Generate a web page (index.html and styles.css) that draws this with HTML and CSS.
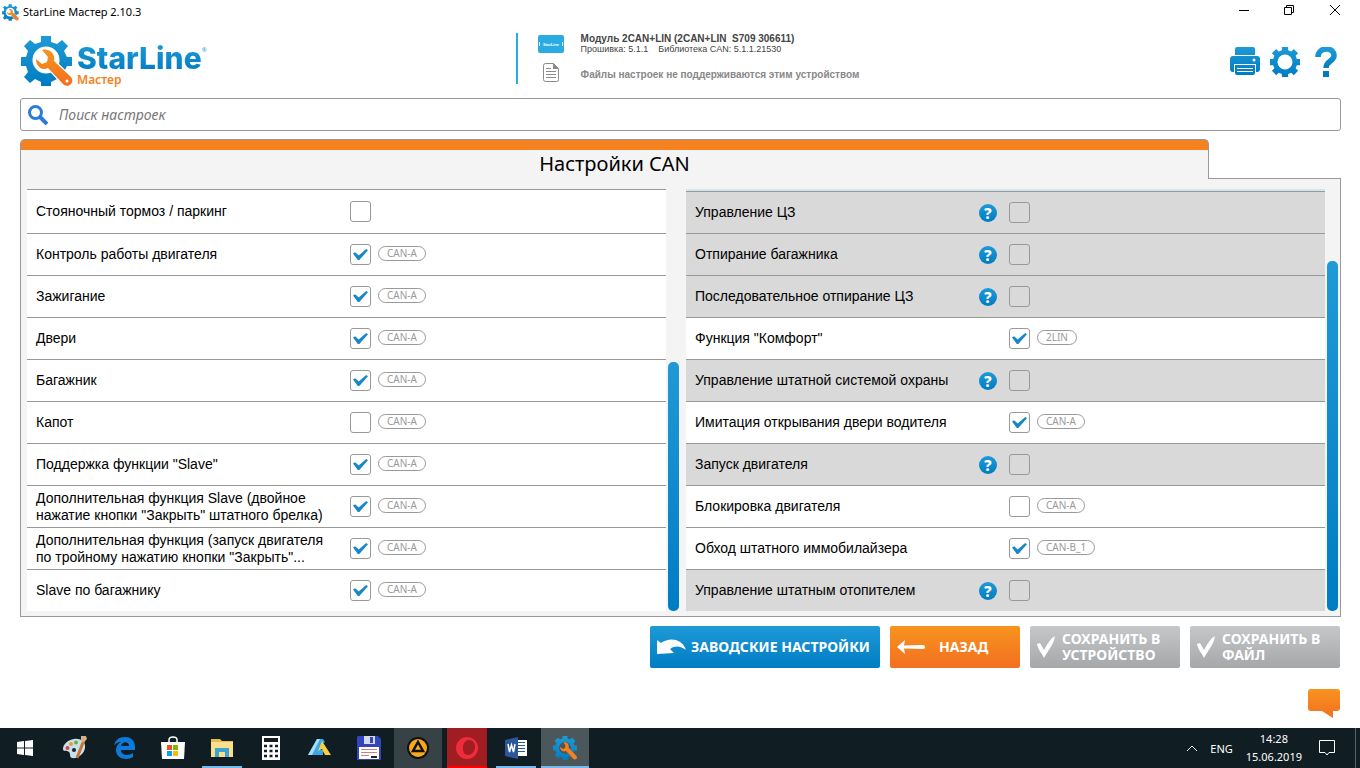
FILE: index.html
```html
<!DOCTYPE html>
<html lang="ru">
<head>
<meta charset="utf-8">
<title>StarLine Мастер 2.10.3</title>
<link rel="stylesheet" href="styles.css">
</head>
<body>
<svg class="defs" width="0" height="0" aria-hidden="true">
  <defs>
    <linearGradient id="blue" x1="0" y1="0" x2="0" y2="1"><stop offset="0" stop-color="#1f9ad6"/><stop offset="1" stop-color="#007cc3"/></linearGradient>
    <linearGradient id="orange" x1="0" y1="0" x2="0" y2="1"><stop offset="0" stop-color="#f7941e"/><stop offset="1" stop-color="#f36f21"/></linearGradient>
    <symbol id="gear" viewBox="0 0 48 48">
      <path fill="url(#blue)" fill-rule="evenodd" d="M19 0h10v5l5 2 4-4 7 7-4 4 2 5h5v10h-5l-2 5 4 4-7 7-4-4-5 2v5H19v-5l-5-2-4 4-7-7 4-4-2-5H0V19h5l2-5-4-4 7-7 4 4 5-2zM24 12a12 12 0 1 0 0 24 12 12 0 0 0 0-24z"/>
    </symbol>
    <symbol id="wrench-gear" viewBox="0 0 52 52">
      <path fill="url(#blue)" d="M20 1h10v6l6 2 5-4 6 6-4 5 3 6h5v9h-5l-3 6 4 5-6 7-5-5-6 3v4H20v-4l-6-3-5 4-6-6 4-5-2-6H0v-9h5l2-6-4-5 6-6 5 4 6-2z"/>
      <circle cx="25" cy="25" r="13.500" fill="#fff"/>
      <path fill="url(#orange)" stroke="#fff" stroke-width="2.500" paint-order="stroke" d="M21 15c7-2 14 4 12 11l17 16c4 5-2 11-7 8L27 33c-7 3-12-2-12-9l6 5 5-2 1-5z"/>
      <circle cx="46" cy="46" r="1.500" fill="#fff"/>
    </symbol>
    <symbol id="tick" viewBox="0 0 18 22"><path fill="#fff" d="M0 8l3-1 4 7C10 8 13 3 18 0c-1 8-6 13-11 22C5 17 1 14 0 8z"/></symbol>
  </defs>
</svg>

<header class="titlebar">
  <svg class="app-icon"><use href="#wrench-gear"/></svg>
  <span class="app-title">StarLine Мастер 2.10.3</span>
  <div class="window-controls">
    <button aria-label="Свернуть"><svg width="12" height="12" viewBox="0 0 12 12"><path d="M1 6.500h10" stroke="#000"/></svg></button>
    <button aria-label="Восстановить"><svg width="12" height="12" viewBox="0 0 12 12" fill="none" stroke="#000"><path d="M1.500 3.500h7v7h-7zM3.500 3V1.500h7v7H9"/></svg></button>
    <button aria-label="Закрыть"><svg width="12" height="12" viewBox="0 0 12 12"><path d="M1 1l10 10M11 1L1 11" stroke="#000"/></svg></button>
  </div>
</header>

<main class="app">
  <section class="topbar">
    <div class="brand">
      <svg class="brand-icon"><use href="#wrench-gear"/></svg>
      <div class="brand-text"><span class="brand-name">StarLine</span><span class="brand-sub">Мастер</span></div>
      <span class="brand-mark">®</span>
    </div>
    <div class="device">
      <svg width="26" height="18" viewBox="0 0 26 18"><rect width="26" height="18" rx="2" fill="#2aace2"/><path d="M1.500 7v4M24.500 7v4" stroke="#fff"/><text x="13" y="11" class="chip-text">StarLine</text></svg>
      <div class="device-info"><strong>Модуль 2CAN+LIN (2CAN+LIN&nbsp; S709 306611)</strong><span class="firmware">Прошивка: 5.1.1 &nbsp;&nbsp; Библиотека CAN: 5.1.1.21530</span></div>
      <svg class="doc-icon" width="16" height="19" viewBox="0 0 16 19"><path d="M2.500.5h8l5 5v11q0 2-2 2h-11q-2 0-2-2v-14q0-2 2-2z" fill="#fff" stroke="#8a8a8a"/><path d="M10 0v6h6z" fill="#8a8a8a"/><path d="M3 5.500h5M3 8.500h10M3 11.500h10M3 14.500h10" stroke="#8a8a8a"/></svg>
      <div class="device-note">Файлы настроек не поддерживаются этим устройством</div>
    </div>
    <div class="tools">
      <button aria-label="Печать"><svg width="30" height="28" viewBox="0 0 30 28"><path fill="url(#blue)" d="M5 8V2q0-2 2-2h16q2 0 2 2v6zM3 9h24q3 0 3 3v10q0 3-3 3h-1v-8H4v8H3q-3 0-3-3V12q0-3 3-3zM5 18h20v8q0 2-2 2H7q-2 0-2-2z"/><circle cx="24" cy="13" r="1.500" fill="#fff"/><path d="M7 21.500h16M7 24.500h16" fill="none" stroke="#fff" stroke-width="1.200"/></svg></button>
      <button aria-label="Параметры"><svg width="30" height="30"><use href="#gear"/></svg></button>
      <button aria-label="Справка"><svg width="22" height="30" viewBox="0 0 22 30"><path fill="none" stroke="url(#blue)" stroke-width="5.500" d="M3 10C3-.5 19-.5 19 8.500c0 6-8 5-8 12.500"/><path fill="#007cc3" d="M8 24h6v6H8z"/></svg></button>
    </div>
  </section>

  <div class="search">
    <svg width="20" height="20" viewBox="0 0 20 20" fill="none" stroke="#2b7cd9"><circle cx="7.500" cy="7.500" r="6" stroke-width="3"/><path d="M12 12l7 7" stroke-width="4"/></svg>
    <input type="search" placeholder="Поиск настроек" aria-label="Поиск настроек">
  </div>

  <button class="tab">Настройки CAN</button>
  <section class="panel">
    <div class="column">
      <ul class="list">
        <li class="row first"><div class="head"><label for="l1">Стояночный тормоз / паркинг</label></div><input type="checkbox" id="l1"></li>
        <li class="row"><div class="head"><label for="l2">Контроль работы двигателя</label></div><input type="checkbox" id="l2" checked><span class="bus">CAN-A</span></li>
        <li class="row"><div class="head"><label for="l3">Зажигание</label></div><input type="checkbox" id="l3" checked><span class="bus">CAN-A</span></li>
        <li class="row"><div class="head"><label for="l4">Двери</label></div><input type="checkbox" id="l4" checked><span class="bus">CAN-A</span></li>
        <li class="row"><div class="head"><label for="l5">Багажник</label></div><input type="checkbox" id="l5" checked><span class="bus">CAN-A</span></li>
        <li class="row"><div class="head"><label for="l6">Капот</label></div><input type="checkbox" id="l6"><span class="bus">CAN-A</span></li>
        <li class="row"><div class="head"><label for="l7">Поддержка функции "Slave"</label></div><input type="checkbox" id="l7" checked><span class="bus">CAN-A</span></li>
        <li class="row"><div class="head"><label for="l8">Дополнительная функция Slave (двойное<br>нажатие кнопки "Закрыть" штатного брелка)</label></div><input type="checkbox" id="l8" checked><span class="bus">CAN-A</span></li>
        <li class="row"><div class="head"><label for="l9">Дополнительная функция (запуск двигателя<br>по тройному нажатию кнопки "Закрыть"...</label></div><input type="checkbox" id="l9" checked><span class="bus">CAN-A</span></li>
        <li class="row"><div class="head"><label for="l10">Slave по багажнику</label></div><input type="checkbox" id="l10" checked><span class="bus">CAN-A</span></li>
      </ul>
      <div class="track"><div class="thumb thumb-left"></div></div>
    </div>
    <div class="column">
      <ul class="list list-scrolled">
        <li class="row off"><div class="head"><label for="r1">Управление ЦЗ</label><button class="help" aria-label="Подсказка">?</button></div><input type="checkbox" id="r1" disabled></li>
        <li class="row off"><div class="head"><label for="r2">Отпирание багажника</label><button class="help" aria-label="Подсказка">?</button></div><input type="checkbox" id="r2" disabled></li>
        <li class="row off"><div class="head"><label for="r3">Последовательное отпирание ЦЗ</label><button class="help" aria-label="Подсказка">?</button></div><input type="checkbox" id="r3" disabled></li>
        <li class="row"><div class="head"><label for="r4">Функция "Комфорт"</label></div><input type="checkbox" id="r4" checked><span class="bus">2LIN</span></li>
        <li class="row off"><div class="head"><label for="r5">Управление штатной системой охраны</label><button class="help" aria-label="Подсказка">?</button></div><input type="checkbox" id="r5" disabled></li>
        <li class="row"><div class="head"><label for="r6">Имитация открывания двери водителя</label></div><input type="checkbox" id="r6" checked><span class="bus">CAN-A</span></li>
        <li class="row off"><div class="head"><label for="r7">Запуск двигателя</label><button class="help" aria-label="Подсказка">?</button></div><input type="checkbox" id="r7" disabled></li>
        <li class="row"><div class="head"><label for="r8">Блокировка двигателя</label></div><input type="checkbox" id="r8"><span class="bus">CAN-A</span></li>
        <li class="row"><div class="head"><label for="r9">Обход штатного иммобилайзера</label></div><input type="checkbox" id="r9" checked><span class="bus">CAN-B_1</span></li>
        <li class="row off"><div class="head"><label for="r10">Управление штатным отопителем</label><button class="help" aria-label="Подсказка">?</button></div><input type="checkbox" id="r10" disabled></li>
      </ul>
      <div class="track"><div class="thumb thumb-right"></div></div>
    </div>
  </section>

  <div class="actions">
    <button class="action primary"><svg width="29" height="16" viewBox="0 0 29 16"><path fill="#fff" d="M0 1l4 3C12-2 25-1 29 11c-5-4-11-5-16-1l4 4L0 15z"/></svg><span>ЗАВОДСКИЕ НАСТРОЙКИ</span></button>
    <button class="action back"><svg width="28" height="16" viewBox="0 0 28 16"><path fill="#fff" d="M0 8l8-7-1 5.500 19-.5q2 0 2 2t-2 2l-19-.5L8 15z"/></svg><span>НАЗАД</span></button>
    <button class="action save" disabled><svg width="18" height="22"><use href="#tick"/></svg><span>СОХРАНИТЬ В УСТРОЙСТВО</span></button>
    <button class="action save" disabled><svg width="18" height="22"><use href="#tick"/></svg><span>СОХРАНИТЬ В ФАЙЛ</span></button>
  </div>
  <button class="chat" aria-label="Обратная связь"><svg width="32" height="29" viewBox="0 0 32 29"><path fill="url(#orange)" d="M3 0h26q3 0 3 3v16q0 3-3 3h-4v7l-11-7H3q-3 0-3-3V3q0-3 3-3z"/></svg></button>
</main>

<footer class="taskbar">
  <button class="task start" aria-label="Пуск"><svg width="16" height="16" viewBox="0 0 16 16" fill="#fff"><path d="M0 2l7-1v6.500H0zM8 1l8-1v7.500H8zM0 8.500h7V15l-7-1zM8 8.500h8V16l-8-1z"/></svg></button>
  <button class="task" aria-label="Paint"><svg width="24" height="24" viewBox="0 0 24 24"><path fill="#c8e0ee" d="M11 3c8-1 12 4 11 9-1 6-7 11-13 10-3-1-1-4-3-6s-6 0-6-3C0 8 5 4 11 3z"/><circle cx="4.500" cy="12" r="2" fill="#d8453c"/><circle cx="8" cy="8" r="2" fill="#e39b38"/><circle cx="13" cy="6.500" r="2" fill="#6cb33e"/><circle cx="11" cy="14" r="2" fill="#15232a"/><path d="M21 4l-7 18" stroke="#c97432" stroke-width="3"/><path d="M18 0h5l1 3-4 4-2-3z" fill="#d8ae82"/></svg></button>
  <button class="task" aria-label="Edge"><svg width="21" height="22" viewBox="0 0 21 22"><path fill="#0c7bd9" fill-rule="evenodd" d="M0 9C1 3 5 0 11 0c7 0 10 5 10 10v3H7c0 6 8 6 12 3v4c-6 4-17 2-17-7 0-4 2-6 5-8-4 0-6 2-7 4zm7 0h8c0-5-7-5-8 0z"/></svg></button>
  <button class="task" aria-label="Store"><svg width="24" height="24" viewBox="0 0 24 24"><path fill="none" stroke="#fff" stroke-width="1.500" d="M8 7V4q0-3 4-3t4 3v3"/><path fill="#fff" d="M0 6h24l-1 17H1z"/><path fill="#f25022" d="M6 9h5v5H6z"/><path fill="#7fba00" d="M12 9h5v5h-5z"/><path fill="#00a4ef" d="M6 15h5v5H6z"/><path fill="#ffb900" d="M12 15h5v5h-5z"/></svg></button>
  <button class="task open" aria-label="Проводник"><svg width="22" height="20" viewBox="0 0 22 20"><path fill="#e8bc4b" d="M0 1h9l2 2h11v4H0z"/><path fill="#fbe08c" d="M0 4h22v15H0z"/><path fill="#3ba4d2" d="M4 10h14v9h-4v-5H8v5H4z"/></svg></button>
  <button class="task" aria-label="Калькулятор"><svg width="18" height="24" viewBox="0 0 18 24"><path fill="#fff" d="M0 0h18v24H0z"/><path fill="#101d22" d="M2 2h14v4H2z"/><path stroke="#101d22" stroke-width="2.500" stroke-dasharray="3 2.500" d="M2 10h14M2 15h14M2 20h14"/></svg></button>
  <button class="task" aria-label="Проигрыватель"><svg width="24" height="20" viewBox="0 0 24 20"><path fill="#39a7e8" d="M9 1h6l2 3-3 2-3 6h4v5H0z"/><path fill="#a9dcf8" d="M9 1h3L4 17H0z"/><path fill="#f6cf45" d="M14 3l9 14h-6l-3-6-4 2z"/></svg></button>
  <button class="task" aria-label="Total Commander"><svg width="24" height="24" viewBox="0 0 24 24"><path fill="#3444bb" d="M1 0h20l3 3v21H0V1z"/><path fill="#d5dbe8" d="M7 0h11v8H7z"/><path fill="#3444bb" d="M13 1h3v6h-3z"/><path fill="#fff" d="M2 11h20v12H2z"/><path stroke="#cf8080" d="M4 13.500h16M4 16.500h16M4 19.500h8"/><path stroke="#222" stroke-width="2" d="M14 21h6"/></svg></button>
  <button class="task lit" aria-label="AIMP"><svg width="22" height="22" viewBox="0 0 22 22"><circle cx="11" cy="11" r="11" fill="#111"/><circle cx="11" cy="11" r="9" fill="#f6a91c"/><path fill="#f6a91c" stroke="#111" stroke-width="2.500" d="M11 5l5 9H6z"/></svg></button>
  <button class="task opera" aria-label="Opera"><svg width="22" height="24" viewBox="0 0 22 24"><path fill="#ee2c3c" fill-rule="evenodd" d="M11 1a11 11 0 1 0 0 22 11 11 0 0 0 0-22zm2 3c4 0 6 3 6 7s-3 8-7 8-5-3-5-7 2-8 6-8z"/></svg></button>
  <button class="task open" aria-label="Word"><svg width="22" height="22" viewBox="0 0 22 22"><path fill="#fff" d="M12 3h10v16H12z"/><path stroke="#2b579a" d="M13 5.500h7M13 8.500h7M13 11.500h7M13 14.500h7"/><path fill="#2b579a" d="M0 3l13-3v22L0 19z"/><path fill="none" stroke="#fff" stroke-width="1.500" d="M3 7l1.500 8L6.500 8l2 7L10 7"/></svg></button>
  <button class="task open active" aria-label="StarLine Мастер"><svg width="24" height="24" viewBox="0 0 48 48"><use href="#gear"/><path fill="#f58220" stroke="#4b575b" stroke-width="2" paint-order="stroke" d="M21 13c7-2 12 4 10 10l16 17c3 5-2 9-6 6L26 30c-7 3-12-2-12-8l6 4 4-2 1-5z"/></svg></button>
  <div class="tray">
    <svg width="12" height="7" viewBox="0 0 12 7"><path d="M1 6l5-5 5 5" fill="none" stroke="#fff"/></svg>
    <span class="lang">ENG</span>
    <div class="clock"><span>14:28</span><span>15.06.2019</span></div>
    <svg width="16" height="16" viewBox="0 0 16 16"><path d="M.5.5h15v12H10L8 15l-2-2.500H.5z" fill="none" stroke="#fff"/></svg>
  </div>
</footer>
</body>
</html>
```
FILE: styles.css
```css
* { box-sizing: border-box; }
body {
  margin: 0;
  min-height: 100vh;
  display: flex;
  flex-direction: column;
  background: #fff;
  color: #000;
  font-family: "Noto Sans", "Open Sans", sans-serif;
  font-size: 14px;
}
button { border: 0; padding: 0; background: none; font: inherit; color: inherit; }
svg { display: block; flex: none; }
.defs { position: absolute; }

.titlebar { display: flex; align-items: center; height: 24px; padding: 0 1px 0 2px; }
.app-icon { width: 17px; height: 17px; }
.app-title { margin: 0 0 2px 4px; font-size: 11px; }
.window-controls { display: flex; margin-left: auto; align-self: flex-start; }
.window-controls button { width: 45px; height: 20px; display: grid; place-items: center; }
.window-controls button:last-child { width: 48px; }

.app { flex: 1; display: flex; flex-direction: column; padding: 0 19px 0 20px; }
.topbar { display: flex; justify-content: space-between; height: 74px; }
.brand { display: flex; padding: 11px 0 0 1px; width: 330px; }
.brand-icon { width: 52px; height: 52px; }
.brand-text { display: flex; flex-direction: column; margin-left: 4px; padding-top: 8px; }
.brand-name {
  font: 800 30px/30px Inter, sans-serif;
  background: linear-gradient(#1f9ad6, #007cc3);
  background-clip: text;
  color: transparent;
}
.brand-sub { font-size: 12px; line-height: 14px; font-weight: 600; color: #f58220; }
.brand-mark { font-size: 6px; line-height: 8px; color: #1f9ad6; margin-top: 11px; }

.device {
  display: grid;
  grid-template-columns: 26px auto;
  grid-template-rows: 22px 19px;
  gap: 8px 17px;
  align-items: center;
  align-self: flex-start;
  height: 51px;
  margin: 9px 0 0 14px;
  padding-left: 20px;
  border-left: 2px solid #2aace2;
  font-family: "Liberation Sans", Arial, sans-serif;
  font-size: 10px;
  line-height: 11px;
  color: #444;
}
.device-info { display: flex; flex-direction: column; white-space: nowrap; }
.firmware { font-size: 9px; }
.device-note { font-weight: 700; color: #888; padding-top: 3px; }
.doc-icon { justify-self: center; }
.chip-text { font: 700 4px "Liberation Sans", sans-serif; fill: #fff; text-anchor: middle; }
.tools { display: flex; justify-content: flex-end; gap: 10px; width: 330px; padding: 23px 4px 0 0; align-items: flex-start; }
.tools button:last-child { margin-left: 5px; }

.search {
  display: flex;
  align-items: center;
  height: 33px;
  padding: 0 8px 0 7px;
  border: 1px solid #999;
  border-radius: 3px;
}
.search input { flex: 1; min-width: 0; border: 0; outline: 0; margin-left: 11px; padding: 0; background: none; font: italic 14px "Noto Sans", sans-serif; }
.search input::placeholder { color: #777; }

.tab {
  z-index: 1;
  width: 90%;
  height: 40px;
  margin-top: 8px;
  border: 1px solid #999;
  border-bottom: 0;
  border-radius: 5px 5px 0 0;
  background: linear-gradient(#f58220 10px, #f4f4f4 10px);
  padding-top: 9px;
  font-size: 20px;
  line-height: 28px;
}
.panel {
  display: grid;
  grid-template-columns: 1fr 1fr;
  gap: 7px;
  margin-top: -1px;
  padding: 10px 2px 5px 6px;
  border: 1px solid #999;
  background: #f4f4f4;
}
.column { display: flex; gap: 2px; min-width: 0; }
.list { flex: 1; margin: 0; padding: 0; list-style: none; background: #fff; }
.list-scrolled { border-top: 2px solid #d3e6f0; }
.row { display: flex; align-items: center; height: 42px; padding-left: 9px; border-top: 1px solid #999; }
.row.first { height: 44px; }
.row.off { background: #d9d9d9; }
.head {
  flex: 0 0 314px;
  display: flex;
  align-items: center;
  justify-content: space-between;
  padding-right: 12px;
  font-family: "Liberation Sans", Arial, sans-serif;
  line-height: 17px;
  white-space: nowrap;
}
.help {
  width: 18px;
  height: 18px;
  border-radius: 9px;
  background: linear-gradient(#1f9ad6, #007cc3);
  color: #fff;
  font: 800 15px/18px "Noto Sans", sans-serif;
}
input[type="checkbox"] {
  appearance: none;
  flex: none;
  display: grid;
  place-items: center;
  width: 21px;
  height: 21px;
  margin: 0;
  border: 1px solid #999;
  border-radius: 3px;
}
input[type="checkbox"]:checked::before {
  content: "";
  width: 15px;
  height: 11px;
  background: #1787c8;
  clip-path: polygon(0 42%, 14% 30%, 38% 58%, 88% 0, 100% 12%, 42% 100%, 32% 100%);
}
.bus {
  margin: 0 0 2px 7px;
  padding: 0 8px;
  border: 1px solid #999;
  border-radius: 8px;
  font-size: 10px;
  line-height: 13px;
  color: #999;
}
.track { display: flex; align-items: flex-end; width: 11px; }
.thumb { width: 100%; border-radius: 5px; background: linear-gradient(#1f9ad6, #007cc3); }
.thumb-left { height: 59%; }
.thumb-right { height: 83%; }

.actions { display: flex; justify-content: flex-end; gap: 10px; margin: 9px 1px 0 0; }
.action {
  display: flex;
  align-items: center;
  height: 42px;
  border-radius: 2px;
  color: #fff;
  font-weight: 700;
  line-height: 16px;
  text-align: left;
  padding: 0 7px;
}
.primary { width: 230px; gap: 5px; background: linear-gradient(#1f9ad6, #007cc3); }
.back { width: 130px; gap: 14px; background: linear-gradient(#f7941e, #f36f21); }
.save { width: 150px; gap: 7px; background: linear-gradient(#c6c7c9, #a6a7a9); }
.chat { align-self: flex-end; margin: 21px 1px 0 0; }

.taskbar { display: flex; gap: 1px; height: 40px; background: #101d22; color: #fff; }
.task { width: 48px; display: grid; place-items: center; }
.start { width: 50px; }
.open { background: linear-gradient(#76b9ed, #76b9ed) center bottom / 40px 2px no-repeat; }
.lit { background: #374246; }
.active { background-color: #4b575b; background-size: 48px 2px; }
.opera { width: 40px; margin: 0 4px; background: linear-gradient(#a01d22 38px, #f00 38px); }
.tray { display: flex; align-items: center; margin-left: auto; padding-right: 20px; margin-right: 4px; border-right: 1px solid #566; font-size: 11px; }
.lang { margin-left: 12px; }
.clock { display: flex; flex-direction: column; align-items: center; margin: 0 17px 0 13px; line-height: 18px; }
```
